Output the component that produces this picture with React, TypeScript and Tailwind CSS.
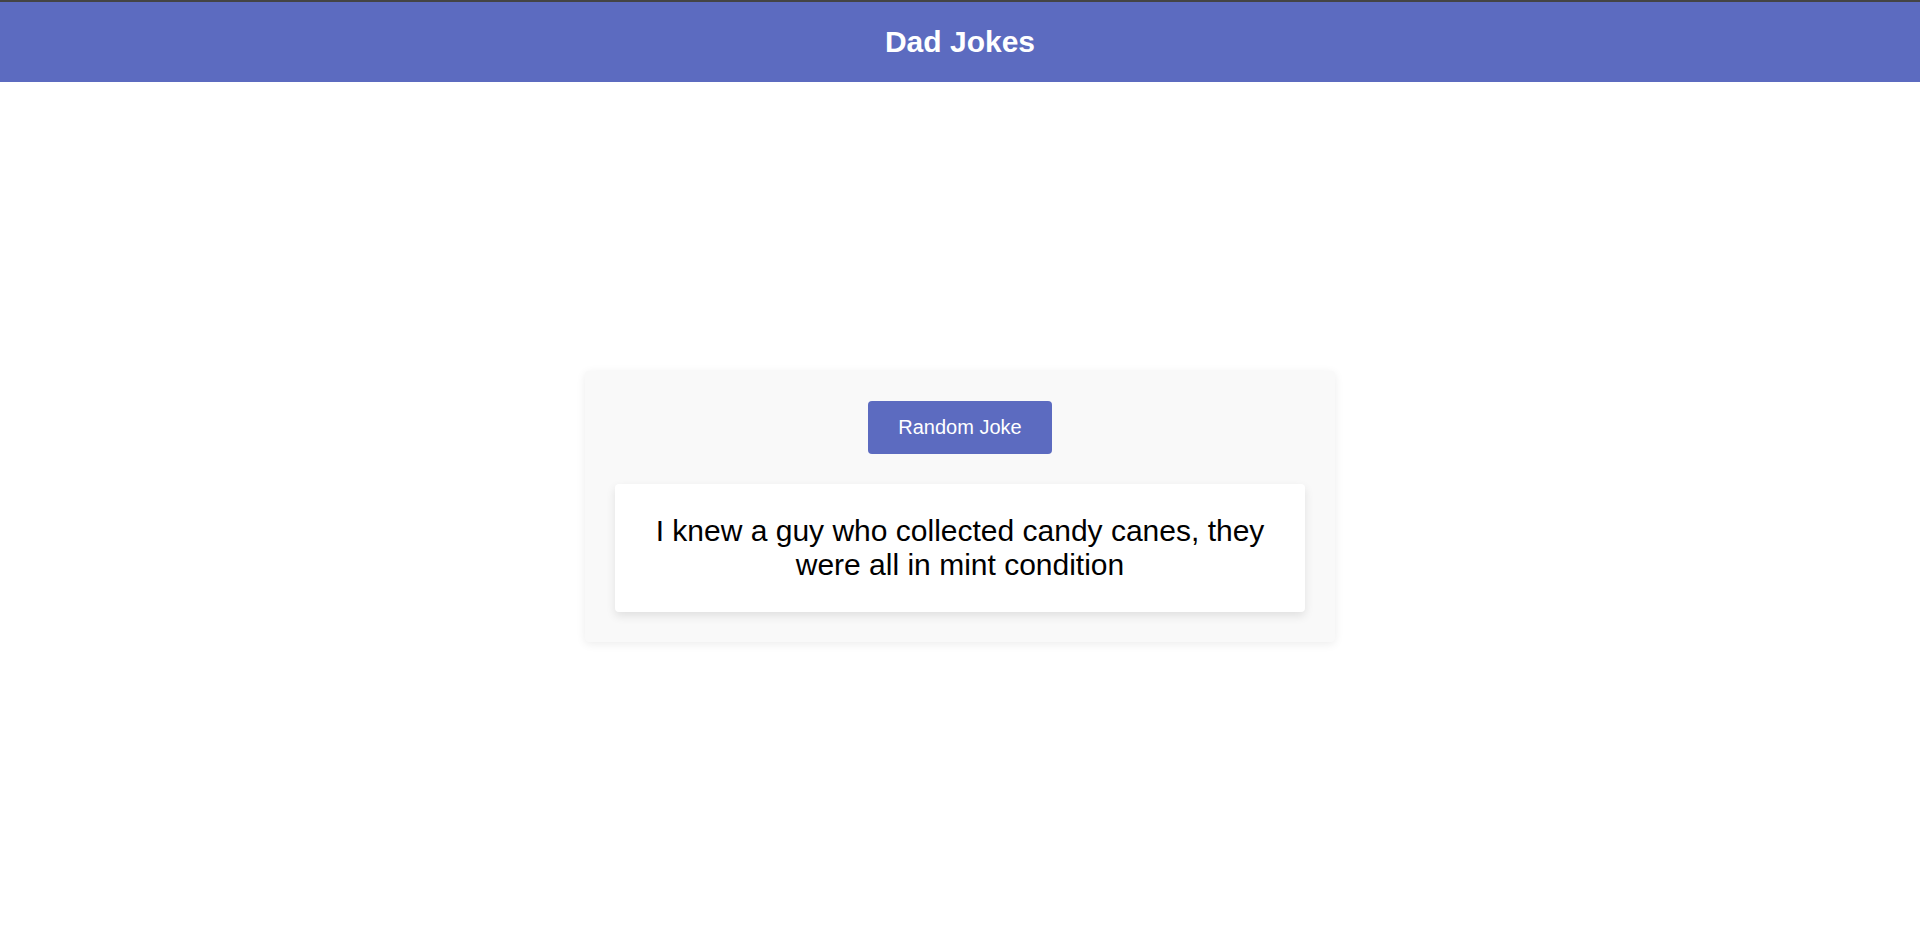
import React from "react";

const App = () => {
  return (
    <div className="flex min-h-screen flex-col bg-white font-['Liberation_Sans',Arial,sans-serif]">
      <header className="flex h-[82px] items-center justify-center border-t-2 border-[#444444] bg-[#5c6bc0]">
        <h1 className="text-[30px] leading-[normal] font-bold text-white">Dad Jokes</h1>
      </header>
      <main className="flex flex-1 items-center justify-center">
        <div className="flex w-[750px] flex-col items-center gap-[30px] rounded bg-[#f9f9f9] p-[30px] shadow-[0_2px_10px_rgba(0,0,0,0.08)]">
          <button className="rounded bg-[#5c6bc0] px-[30px] py-[15px] text-[20px] leading-[23px] text-white">
            Random Joke
          </button>
          <div className="w-full rounded bg-white p-[30px] text-center text-[30px] leading-[normal] text-black shadow-[0_4px_10px_rgba(0,0,0,0.1)]">
            I knew a guy who collected candy canes, they were all in mint
            condition
          </div>
        </div>
      </main>
    </div>
  );
};

export default App;
